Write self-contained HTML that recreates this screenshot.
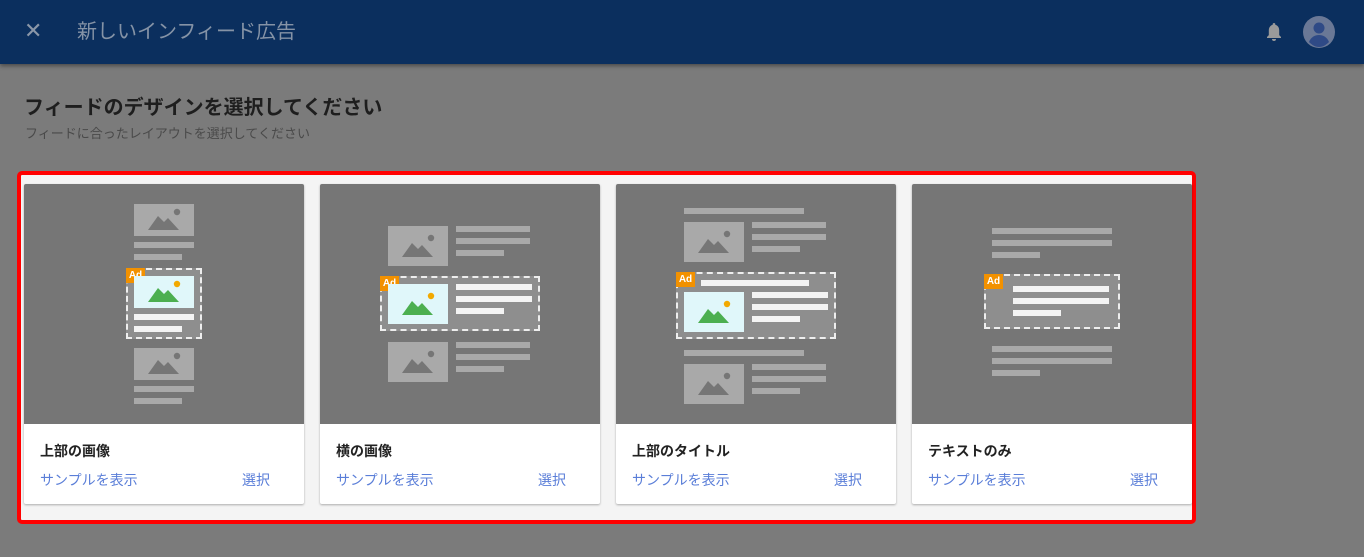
<!DOCTYPE html>
<html><head><meta charset="utf-8"><style>
*{margin:0;padding:0;box-sizing:border-box}
body{width:1364px;height:557px;background:#7b7b7b;font-family:"Liberation Sans","Noto Sans CJK JP",sans-serif;position:relative;overflow:hidden}
.a{position:absolute}
.hd{left:0;top:0;width:1364px;height:64px;background:#0b2f5e;box-shadow:0 2px 4px rgba(0,0,0,.4)}
.card{position:absolute;top:184px;width:280px;height:320px;background:#fff;border-radius:2px;box-shadow:0 1px 2px rgba(0,0,0,.3);overflow:hidden}
.pv{position:absolute;left:0;top:0;width:280px;height:240px;background:#767676}
.g{position:absolute;background:#a9a9a9}
.w{position:absolute;background:#f3f3f3}
.box{position:absolute;background:#8e8e8e;border:2px dashed #eee}
.ad{position:absolute;background:#f29100;color:#fff;font-size:10px;font-weight:bold;width:19px;height:15px;line-height:15px;text-align:center}
.t{position:absolute;left:16px;top:257px;font-size:14px;font-weight:bold;color:#222}
.l1{position:absolute;left:16px;top:286px;font-size:14px;color:#5a7ed8}
.l2{position:absolute;left:218px;top:286px;font-size:14px;color:#5a7ed8}
svg{position:absolute}
</style></head><body>
<div class="a hd"></div>
<div class="a" style="left:24px;top:18px;font-size:22px;color:#8b97a8;line-height:26px">✕</div>
<div class="a" style="left:77px;top:19px;font-size:20px;color:#8593a6;line-height:26px">新しいインフィード広告</div>
<svg style="left:1265px;top:21px" width="18" height="22" viewBox="0 0 18 22"><path d="M9 2c-.8 0-1.3.6-1.3 1.3v.5C5.2 4.5 3.8 6.7 3.8 9.3v4.8L2 16v1h14v-1l-1.8-1.9V9.3c0-2.6-1.4-4.8-3.9-5.5v-.5C10.3 2.6 9.8 2 9 2zM7 18a2 2 0 004 0z" fill="#9a9a9a"/></svg>
<svg style="left:1303px;top:16px" width="32" height="32" viewBox="0 0 32 32"><circle cx="16" cy="16" r="16" fill="#6a7896"/><circle cx="16" cy="12" r="5.5" fill="#2f4a86"/><path d="M6 26c2-5 6-7 10-7s8 2 10 7c-3 3-6 5-10 5s-7-2-10-5z" fill="#2f4a86"/></svg>

<div class="a" style="left:24px;top:91px;font-size:20px;font-weight:bold;color:#1e1e1e">フィードのデザインを選択してください</div>
<div class="a" style="left:25px;top:123px;font-size:13px;color:#4a4a4a">フィードに合ったレイアウトを選択してください</div>

<div class="a" style="left:17px;top:171px;width:1179px;height:353px;border:4px solid #ff0000;border-radius:5px;background:#f4f4f4"></div>

<!-- Card 1 -->
<div class="card" style="left:24px"><div class="pv">
<svg style="left:110px;top:20px" width="60" height="32"><rect width="60" height="32" fill="#a9a9a9"/><path d="M14 26L24 12 30 18 34 14 45 26z" fill="#767676"/><circle cx="43" cy="8" r="3.2" fill="#767676"/></svg>
<div class="g" style="left:110px;top:58px;width:60px;height:6px"></div>
<div class="g" style="left:110px;top:70px;width:48px;height:6px"></div>
<div class="box" style="left:102px;top:84px;width:76px;height:71px"></div>
<div class="ad" style="left:102px;top:84px">Ad</div>
<svg style="left:110px;top:92px" width="60" height="32"><rect width="60" height="32" fill="#e0f7fa"/><path d="M14 26L24 12 30 18 34 14 45 26z" fill="#4caf50"/><circle cx="43" cy="8" r="3.2" fill="#f2a900"/></svg>
<div class="w" style="left:110px;top:130px;width:60px;height:6px"></div>
<div class="w" style="left:110px;top:142px;width:48px;height:6px"></div>
<svg style="left:110px;top:164px" width="60" height="32"><rect width="60" height="32" fill="#a9a9a9"/><path d="M14 26L24 12 30 18 34 14 45 26z" fill="#767676"/><circle cx="43" cy="8" r="3.2" fill="#767676"/></svg>
<div class="g" style="left:110px;top:202px;width:60px;height:6px"></div>
<div class="g" style="left:110px;top:214px;width:48px;height:6px"></div>
</div>
<div class="t">上部の画像</div><div class="l1">サンプルを表示</div><div class="l2">選択</div></div>

<!-- Card 2 -->
<div class="card" style="left:320px"><div class="pv">
<svg style="left:68px;top:42px" width="60" height="40"><rect width="60" height="40" fill="#a9a9a9"/><path d="M14 31L24 17 30 23 34 19 45 31z" fill="#767676"/><circle cx="43" cy="12" r="3.2" fill="#767676"/></svg>
<div class="g" style="left:136px;top:42px;width:74px;height:6px"></div>
<div class="g" style="left:136px;top:54px;width:74px;height:6px"></div>
<div class="g" style="left:136px;top:66px;width:48px;height:6px"></div>
<div class="box" style="left:60px;top:92px;width:160px;height:55px"></div>
<div class="ad" style="left:60px;top:92px">Ad</div>
<svg style="left:68px;top:100px" width="60" height="40"><rect width="60" height="40" fill="#e0f7fa"/><path d="M14 31L24 17 30 23 34 19 45 31z" fill="#4caf50"/><circle cx="43" cy="12" r="3.2" fill="#f2a900"/></svg>
<div class="w" style="left:136px;top:100px;width:76px;height:6px"></div>
<div class="w" style="left:136px;top:112px;width:76px;height:6px"></div>
<div class="w" style="left:136px;top:124px;width:48px;height:6px"></div>
<svg style="left:68px;top:158px" width="60" height="40"><rect width="60" height="40" fill="#a9a9a9"/><path d="M14 31L24 17 30 23 34 19 45 31z" fill="#767676"/><circle cx="43" cy="12" r="3.2" fill="#767676"/></svg>
<div class="g" style="left:136px;top:158px;width:74px;height:6px"></div>
<div class="g" style="left:136px;top:170px;width:74px;height:6px"></div>
<div class="g" style="left:136px;top:182px;width:48px;height:6px"></div>
</div>
<div class="t">横の画像</div><div class="l1">サンプルを表示</div><div class="l2">選択</div></div>

<!-- Card 3 -->
<div class="card" style="left:616px"><div class="pv">
<div class="g" style="left:68px;top:24px;width:120px;height:6px"></div>
<svg style="left:68px;top:38px" width="60" height="40"><rect width="60" height="40" fill="#a9a9a9"/><path d="M14 31L24 17 30 23 34 19 45 31z" fill="#767676"/><circle cx="43" cy="12" r="3.2" fill="#767676"/></svg>
<div class="g" style="left:136px;top:38px;width:74px;height:6px"></div>
<div class="g" style="left:136px;top:50px;width:74px;height:6px"></div>
<div class="g" style="left:136px;top:62px;width:48px;height:6px"></div>
<div class="box" style="left:60px;top:88px;width:160px;height:67px"></div>
<div class="ad" style="left:60px;top:88px">Ad</div>
<div class="w" style="left:85px;top:96px;width:108px;height:6px"></div>
<svg style="left:68px;top:108px" width="60" height="40"><rect width="60" height="40" fill="#e0f7fa"/><path d="M14 31L24 17 30 23 34 19 45 31z" fill="#4caf50"/><circle cx="43" cy="12" r="3.2" fill="#f2a900"/></svg>
<div class="w" style="left:136px;top:108px;width:76px;height:6px"></div>
<div class="w" style="left:136px;top:120px;width:76px;height:6px"></div>
<div class="w" style="left:136px;top:132px;width:48px;height:6px"></div>
<div class="g" style="left:68px;top:166px;width:120px;height:6px"></div>
<svg style="left:68px;top:180px" width="60" height="40"><rect width="60" height="40" fill="#a9a9a9"/><path d="M14 31L24 17 30 23 34 19 45 31z" fill="#767676"/><circle cx="43" cy="12" r="3.2" fill="#767676"/></svg>
<div class="g" style="left:136px;top:180px;width:74px;height:6px"></div>
<div class="g" style="left:136px;top:192px;width:74px;height:6px"></div>
<div class="g" style="left:136px;top:204px;width:48px;height:6px"></div>
</div>
<div class="t">上部のタイトル</div><div class="l1">サンプルを表示</div><div class="l2">選択</div></div>

<!-- Card 4 -->
<div class="card" style="left:912px"><div class="pv">
<div class="g" style="left:80px;top:44px;width:120px;height:6px"></div>
<div class="g" style="left:80px;top:56px;width:120px;height:6px"></div>
<div class="g" style="left:80px;top:68px;width:48px;height:6px"></div>
<div class="box" style="left:72px;top:90px;width:136px;height:55px"></div>
<div class="ad" style="left:72px;top:90px">Ad</div>
<div class="w" style="left:101px;top:102px;width:96px;height:6px"></div>
<div class="w" style="left:101px;top:114px;width:96px;height:6px"></div>
<div class="w" style="left:101px;top:126px;width:48px;height:6px"></div>
<div class="g" style="left:80px;top:162px;width:120px;height:6px"></div>
<div class="g" style="left:80px;top:174px;width:120px;height:6px"></div>
<div class="g" style="left:80px;top:186px;width:48px;height:6px"></div>
</div>
<div class="t">テキストのみ</div><div class="l1">サンプルを表示</div><div class="l2">選択</div></div>
</body></html>
